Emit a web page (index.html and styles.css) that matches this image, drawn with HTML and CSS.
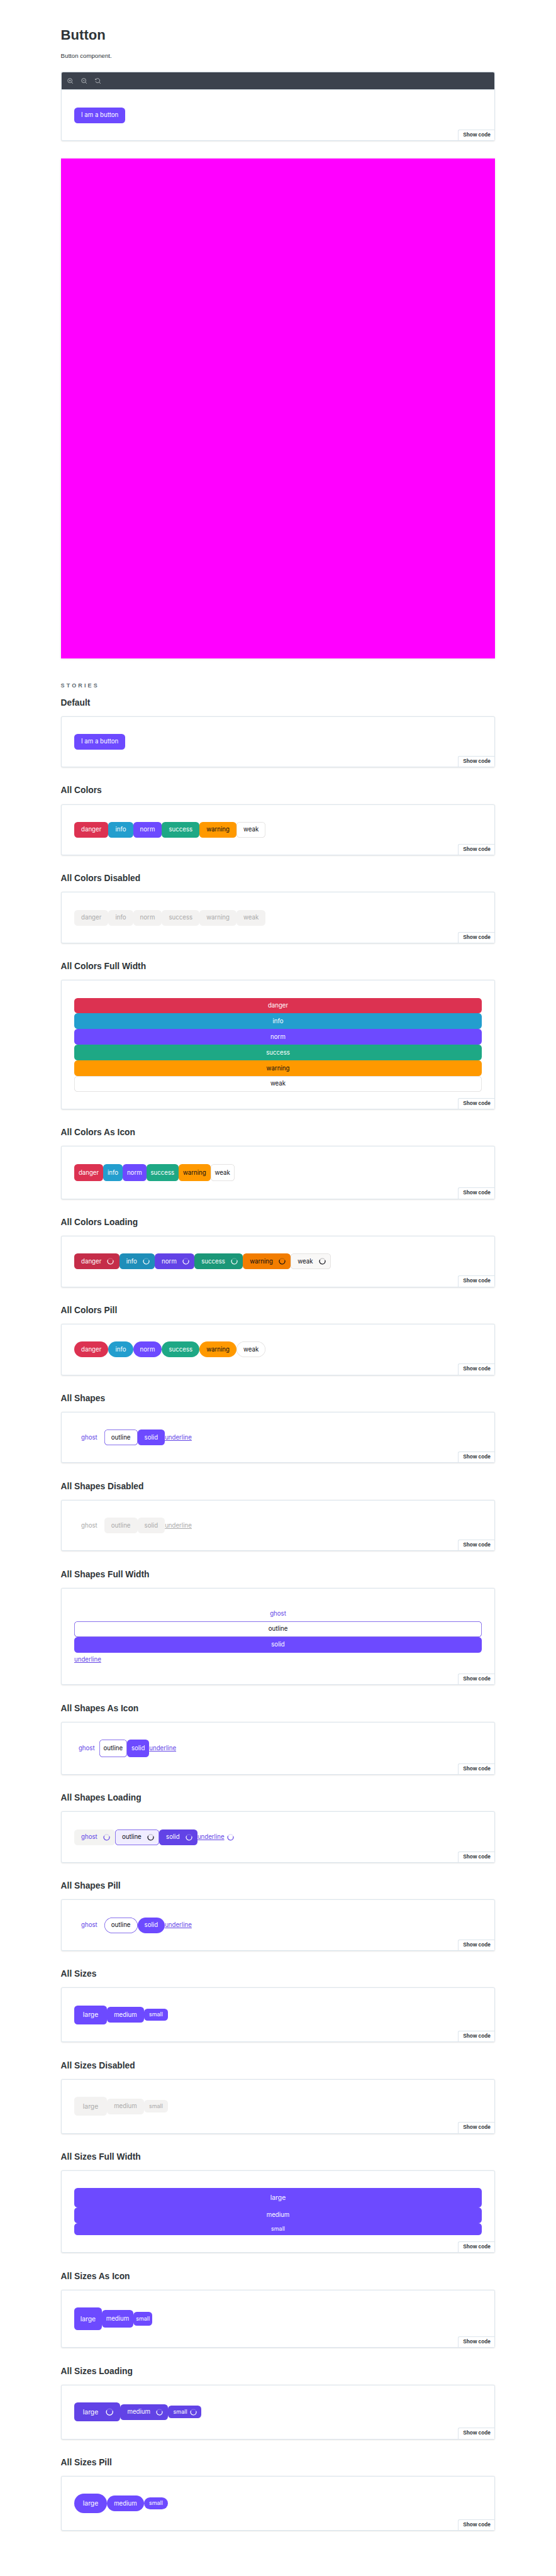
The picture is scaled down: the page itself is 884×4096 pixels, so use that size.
FILE: index.html
```html
<!DOCTYPE html>
<html lang="en">
<head>
<meta charset="utf-8">
<title>Button</title>
<link rel="stylesheet" href="styles.css">
</head>
<body>
<main class="docs">
  <h1 class="title">Button</h1>
  <p class="lead">Button component.</p>
  <section class="preview preview--primary">
    <div class="toolbar">
      <svg viewBox="0 0 14 14"><path d="M6 4v4M4 6h4M9.7 9.7L13 13"/><circle cx="6" cy="6" r="5"/></svg>
      <svg viewBox="0 0 14 14"><path d="M4 6h4M9.7 9.7L13 13"/><circle cx="6" cy="6" r="5"/></svg>
      <svg viewBox="0 0 14 14"><path d="M9.7 9.7L13 13M1 1.5V4h2.5M1.5 3.9A5 5 0 1 1 1.3 7.7"/></svg>
    </div>
    <div class="canvas"><button class="btn norm">I am a button</button></div>
    <span class="code">Show code</span>
  </section>
  <div class="args"></div>
  <h2 class="stories">Stories</h2>
  <div id="stories"></div>
</main>
<script src="stories.js"></script>
</body>
</html>
```
FILE: stories.js
```js
const colors = ["danger", "info", "norm", "success", "warning", "weak"];
const shapes = ["ghost", "outline", "solid", "underline"];
const sizes = ["large", "medium", "small"];
const spinner = '<svg class="spinner" viewBox="0 0 16 16"><circle cx="8" cy="8" r="6.5" opacity=".25"/><path d="M2.4 4.7A6.5 6.5 0 1 0 14.1 5.7"/></svg>';

function button(name, group, variant) {
  const classes = ["btn", name];
  if (group === "Sizes") classes.push("solid");
  if (variant) classes.push(variant.toLowerCase().replace(" ", "-"));
  return `<button class="${classes.join(" ")}">${name}${variant === "Loading" ? spinner : ""}</button>`;
}

function story(title, content, full) {
  return `<h3 class="heading">${title}</h3>
    <section class="preview"><div class="canvas${full ? " canvas--full" : ""}">${content}</div><span class="code">Show code</span></section>`;
}

let html = story("Default", '<button class="btn norm">I am a button</button>');
for (const [group, names] of [["Colors", colors], ["Shapes", shapes], ["Sizes", sizes]]) {
  for (const variant of ["", "Disabled", "Full Width", "As Icon", "Loading", "Pill"]) {
    html += story(`All ${group} ${variant}`.trim(), names.map(n => button(n, group, variant)).join(""), variant === "Full Width");
  }
}
document.getElementById("stories").innerHTML = html;
```
FILE: styles.css
```css
/* 1rem stands for ten design pixels */
html { font-size: 6.908px; }
* { box-sizing: border-box; }
body { margin: 0; background: #fff; color: #2e3438; font-family: "Liberation Sans", Arial, sans-serif; }
.docs { width: 100rem; margin: 0 auto; padding-top: 6rem; height: 592.9rem; }
.title { margin: 0; font-size: 3.2rem; line-height: 4.4rem; color: #2e3438; }
.lead { margin: 1.4rem 0 2.53rem; font-size: 1.4rem; line-height: 2.2rem; }

.preview { position: relative; border: 1px solid #dce5ec; border-radius: .4rem; background: #fff; box-shadow: 0 .1rem .3rem rgba(0, 0, 0, .1); }
.toolbar { display: flex; align-items: center; height: 4rem; margin-top: calc(.1rem - 1px); padding-left: 1.4rem; gap: 1.8rem; background: #3c424d; border-radius: .3rem .3rem 0 0; }
.toolbar svg { width: 1.4rem; height: 1.4rem; fill: none; stroke: #dfe3e6; stroke-width: 1; }
.toolbar + .canvas { border-top: 1px solid #dce5ec; }
.canvas { display: flex; align-items: center; padding: calc(4.1rem - 1px) calc(3.1rem - 1px); }
.canvas--full { flex-direction: column; align-items: stretch; }
.code { position: absolute; right: 0; bottom: 0; width: 8.4rem; height: 2.5rem; padding-left: 1rem; border: 1px solid #dce5ec; border-width: 1px 0 0 1px; border-radius: .4rem 0 0 0; background: #fff; font-size: 1.2rem; font-weight: 700; line-height: 2.4rem; white-space: nowrap; }

.args { height: 115.1rem; margin-top: 4rem; background: #f0f; box-shadow: 0 .1rem .6rem rgba(0, 0, 0, .1); }
.stories { margin: 5.15rem 0 0; font-size: 1.3rem; line-height: 2.4rem; height: 2.7rem; letter-spacing: .35em; text-transform: uppercase; color: #5c6870; }
.heading { margin: 0; height: 8.455rem; padding-top: 4.1rem; font-size: 2rem; line-height: 2.4rem; }
.heading:first-child { height: 5.46rem; padding-top: 1.1rem; }

.btn { display: flex; flex: none; align-items: center; justify-content: center; height: 3.6rem; margin: 0; padding: 0 1.6rem; border: 0 solid transparent; border-radius: .8rem; background: #6d4aff; color: #fff; font: 400 1.4rem/1.43 Inter, sans-serif; white-space: nowrap; }
.danger { background: #dc3251; }
.info { background: #239ece; }
.success { background: #1ea885; }
.warning { background: #ff9900; color: #0c0c14; }
.weak { background: #fff; color: #0c0c14; box-shadow: inset 0 0 0 .1rem #dddbda; }
.ghost, .underline { background: none; color: #6243e6; }
.outline { background: #fff; color: #0c0c14; box-shadow: inset 0 0 0 .1rem #6243e6; }
.underline { height: 3.4rem; padding: 0; text-decoration: underline; justify-content: flex-start; border-radius: 0; }
.large { height: 4.4rem; padding: 0 2rem; font-size: 1.5rem; }
.small { height: 2.8rem; padding: 0 1.2rem; font-size: 1.3rem; }

.pill { border-radius: 99rem; }
.as-icon { height: 4rem; padding: 0 1rem; }
.as-icon.large { height: 5.2rem; padding: 0 1.4rem; }
.as-icon.small { height: 3.2rem; padding: 0 .6rem; }
.as-icon.underline { padding: 0; }

.disabled { background: #f3f2f1; color: #a9a9a9; box-shadow: none; }
.disabled.ghost, .disabled.underline { background: none; }

.loading { padding-right: 1.2rem; gap: 1.3rem; background: #6243e6; }
.loading.danger { background: #c52d49; }
.loading.info { background: #1f8eb9; }
.loading.success { background: #1b9778; }
.loading.warning { background: #f27d00; }
.loading.weak { background: #f9f8f7; }
.loading.ghost { background: #f3f3f1; }
.loading.outline { background: #f0edff; }
.loading.underline { background: none; padding: 0; gap: .65rem; }
.loading.large { padding-right: 1.6rem; gap: 1.7rem; }
.loading.small { padding-right: 1rem; gap: .65rem; }
.spinner { width: 1.6rem; height: 1.6rem; fill: none; stroke: currentColor; stroke-width: 1.6; }
.large .spinner { width: 1.8rem; height: 1.8rem; }
```
